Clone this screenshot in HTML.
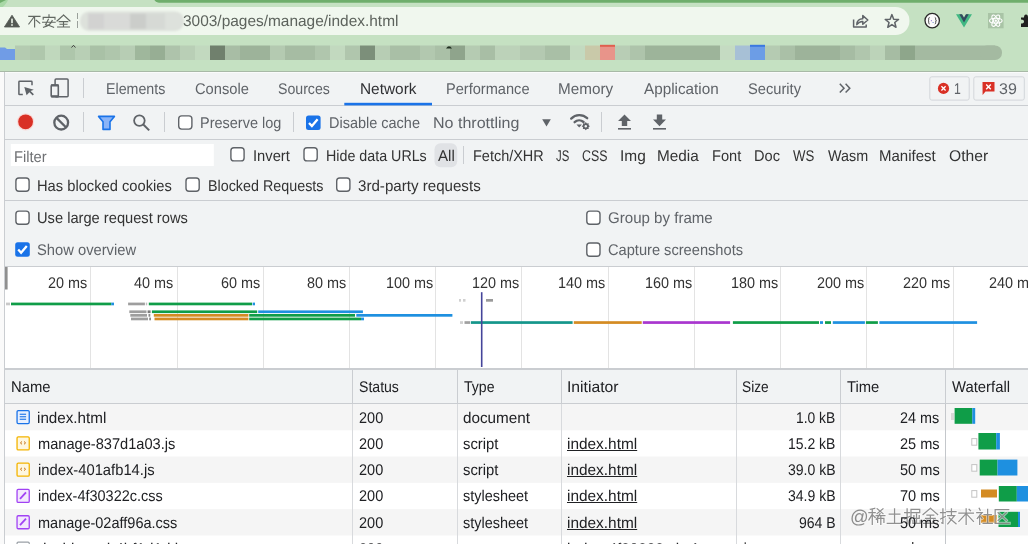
<!DOCTYPE html>
<html><head><meta charset="utf-8">
<style>
html,body{margin:0;padding:0;width:1028px;height:544px;overflow:hidden;background:#fff;}
body{position:relative;font-family:"Liberation Sans",sans-serif;}
svg.bg{position:absolute;left:0;top:0;}
.t{position:absolute;white-space:pre;line-height:20px;transform-origin:0 0;text-rendering:geometricPrecision;font-family:"Liberation Sans",sans-serif;}
</style></head><body>
<svg class="bg" width="1028" height="544" viewBox="0 0 1028 544">
<defs><filter id="bl" x="-10%" y="-30%" width="120%" height="160%"><feGaussianBlur stdDeviation="1.2"/></filter><filter id="bl2" x="-10%" y="-30%" width="120%" height="160%"><feGaussianBlur stdDeviation="0.6"/></filter></defs>
<rect x="0.00" y="0.00" width="1028.00" height="72.00" fill="#c5e1c2" />
<rect x="154" y="-10" width="900" height="12.8" rx="5" fill="#6fae6c"/>
<path d="M0 0 H8 Q6 5 0 9 Z" fill="#a8d8a6"/>
<path d="M0 0 H6 Q3 1.5 0 3 Z" fill="#6fae6c"/>
<rect x="-20" y="7" width="929.5" height="28" rx="14" fill="#f0f7ee"/>
<path d="M12 15.2 L19.6 27 H4.4 Z" fill="#535853" stroke="#535853" stroke-width="0.8" stroke-linejoin="round"/>
<rect x="11.20" y="18.60" width="1.60" height="4.60" fill="#eef6ec" />
<rect x="11.20" y="24.20" width="1.60" height="1.60" fill="#eef6ec" />
<g stroke="#626862" stroke-width="1.15" fill="none" stroke-linecap="square">
<path d="M28.8 16.3 H40 M34.6 16.5 V27 M34 17 L28.8 24 M36.2 20.2 L39.8 23.2"/>
<path d="M49 14.8 V16.6 M43.2 19.2 V17.3 H55 V19.2 M42.6 22.2 H55.2 M48.4 19.2 L45.5 24.8 Q50 25.5 53.6 27.2 M52.2 20.5 Q50.5 25.5 43.5 27.2"/>
<path d="M63.5 15 L57 21 M63.5 15 L70 21 M59.2 21.6 H67.8 M60 24.2 H67 M57.6 27 H69.4 M63.5 21.6 V27"/>
</g>
<rect x="77.00" y="13.00" width="1.00" height="6.00" fill="#9aa09a" />
<rect x="77.00" y="21.00" width="1.00" height="7.00" fill="#9aa09a" />
<g filter="url(#bl)">
<rect x="80" y="11.5" width="104" height="19.5" rx="9" fill="#dde1db"/>
<rect x="88.00" y="13.50" width="16.00" height="15.50" fill="#d2d2d1" />
<rect x="104.00" y="13.50" width="26.00" height="15.50" fill="#d9dad8" />
<rect x="130.00" y="13.50" width="16.00" height="15.50" fill="#cbcdca" />
<rect x="146.00" y="13.50" width="19.00" height="15.50" fill="#d6d9d5" />
<rect x="165.00" y="13.50" width="16.00" height="15.50" fill="#dde1dc" />
</g>
<g stroke="#5f6368" stroke-width="1.5" fill="none" stroke-linejoin="round">
<path d="M853.6 19.5 V27 H866.2 V24.5"/>
<path d="M856.8 24.6 Q857.2 18.8 862.8 18.8 V15.6 L867.8 20 L862.8 24.2 V21.4 Q859.4 21.2 856.8 24.6 Z"/>
</g>
<polygon points="891.90,14.60 893.66,19.17 898.56,19.44 894.75,22.53 896.01,27.26 891.90,24.60 887.79,27.26 889.05,22.53 885.24,19.44 890.14,19.17" fill="none" stroke="#5f6368" stroke-width="1.5" stroke-linejoin="round"/>
<circle cx="932.2" cy="20.6" r="7.2" fill="#fbfbfb" stroke="#2a2a2a" stroke-width="1.3"/>
<path d="M929.6 17.4 Q928.6 17.6 928.7 18.8 V19.8 Q928.7 20.6 928 20.7 Q928.7 20.8 928.7 21.6 V22.6 Q928.6 23.8 929.6 24 M934.8 17.4 Q935.8 17.6 935.7 18.8 V19.8 Q935.7 20.6 936.4 20.7 Q935.7 20.8 935.7 21.6 V22.6 Q935.8 23.8 934.8 24" stroke="#333" stroke-width="0.9" fill="none"/>
<rect x="930.90" y="20.20" width="1.00" height="1.00" fill="#8a6ad0" />
<rect x="932.60" y="22.00" width="1.00" height="1.00" fill="#6a8ad0" />
<path d="M956 14.3 H962 L964 17.7 L966 14.3 H972 L964 27.6 Z" fill="#41b883"/>
<path d="M959.3 14.3 H962 L964 17.7 L966 14.3 H968.7 L964 22.4 Z" fill="#35495e"/>
<rect x="988.00" y="13.00" width="15.60" height="15.30" fill="#a9c4a6" />
<g stroke="#fff" stroke-width="1.1" fill="none">
<ellipse cx="995.8" cy="20.65" rx="6.3" ry="2.4" transform="rotate(0 995.8 20.65)"/>
<ellipse cx="995.8" cy="20.65" rx="6.3" ry="2.4" transform="rotate(60 995.8 20.65)"/>
<ellipse cx="995.8" cy="20.65" rx="6.3" ry="2.4" transform="rotate(120 995.8 20.65)"/>
</g><circle cx="995.8" cy="20.65" r="1.2" fill="#fff"/>
<path d="M1021 17.5 H1024 Q1024 14.5 1026 14.5 Q1028 14.5 1028 17.5 H1030 V27 H1021 V23.5 Q1024 23.5 1024 21.5 Q1024 19.5 1021 19.5 Z" fill="#1f1f1f"/>
<g filter="url(#bl2)">
<rect x="15.00" y="45.50" width="15.00" height="14.50" fill="#b4cbb1" />
<rect x="30.00" y="45.50" width="15.00" height="14.50" fill="#afc7ac" />
<rect x="45.00" y="45.50" width="15.00" height="14.50" fill="#c0d8bd" />
<rect x="60.00" y="45.50" width="15.00" height="14.50" fill="#aec6ab" />
<rect x="75.00" y="45.50" width="15.00" height="14.50" fill="#b8cfb5" />
<rect x="90.00" y="45.50" width="15.00" height="14.50" fill="#a9c1a6" />
<rect x="105.00" y="45.50" width="15.00" height="14.50" fill="#afc6ac" />
<rect x="120.00" y="45.50" width="15.00" height="14.50" fill="#b7cdb4" />
<rect x="135.00" y="45.50" width="15.00" height="14.50" fill="#9fb79c" />
<rect x="150.00" y="45.50" width="15.00" height="14.50" fill="#97ae94" />
<rect x="165.00" y="45.50" width="15.00" height="14.50" fill="#aec3ab" />
<rect x="180.00" y="45.50" width="15.00" height="14.50" fill="#b9cfb6" />
<rect x="195.00" y="45.50" width="15.00" height="14.50" fill="#c2d9bf" />
<rect x="210.00" y="45.50" width="15.00" height="14.50" fill="#6f806d" />
<rect x="225.00" y="45.50" width="15.00" height="14.50" fill="#a8bda5" />
<rect x="240.00" y="45.50" width="30.00" height="14.50" fill="#9db39a" />
<rect x="270.00" y="45.50" width="15.00" height="14.50" fill="#b4cab1" />
<rect x="285.00" y="45.50" width="30.00" height="14.50" fill="#a6bca3" />
<rect x="315.00" y="45.50" width="15.00" height="14.50" fill="#b0c6ad" />
<rect x="330.00" y="45.50" width="15.00" height="14.50" fill="#c2d9bf" />
<rect x="345.00" y="45.50" width="15.00" height="14.50" fill="#b0c6ad" />
<rect x="360.00" y="45.50" width="15.00" height="14.50" fill="#7c8f7a" />
<rect x="375.00" y="45.50" width="15.00" height="14.50" fill="#b7cdb4" />
<rect x="390.00" y="45.50" width="30.00" height="14.50" fill="#a9bfa6" />
<rect x="420.00" y="45.50" width="15.00" height="14.50" fill="#b2c8af" />
<rect x="435.00" y="45.50" width="15.00" height="14.50" fill="#aac0a7" />
<rect x="450.00" y="45.50" width="15.00" height="14.50" fill="#8fa48c" />
<rect x="465.00" y="45.50" width="15.00" height="14.50" fill="#b5cbb2" />
<rect x="480.00" y="45.50" width="15.00" height="14.50" fill="#a8bea5" />
<rect x="495.00" y="45.50" width="25.00" height="14.50" fill="#bcd2b9" />
<rect x="520.00" y="45.50" width="25.00" height="14.50" fill="#b4c9b1" />
<rect x="545.00" y="45.50" width="25.00" height="14.50" fill="#a9bfa6" />
<rect x="570.00" y="45.50" width="15.00" height="14.50" fill="#c3dac0" />
<rect x="585.00" y="45.50" width="15.00" height="14.50" fill="#c9c9a9" />
<rect x="600.00" y="45.50" width="15.00" height="14.50" fill="#e8948a" />
<rect x="615.00" y="45.50" width="15.00" height="14.50" fill="#b8cdb5" />
<rect x="630.00" y="45.50" width="15.00" height="14.50" fill="#aec4ab" />
<rect x="645.00" y="45.50" width="75.00" height="14.50" fill="#9db49a" />
<rect x="720.00" y="45.50" width="15.00" height="14.50" fill="#c5dbc2" />
<rect x="735.00" y="45.50" width="15.00" height="14.50" fill="#a7c0d6" />
<rect x="750.00" y="45.50" width="15.00" height="14.50" fill="#6c9de6" />
<rect x="765.00" y="45.50" width="15.00" height="14.50" fill="#b5cbb2" />
<rect x="780.00" y="45.50" width="15.00" height="14.50" fill="#aac0a7" />
<rect x="795.00" y="45.50" width="45.00" height="14.50" fill="#9db39a" />
<rect x="840.00" y="45.50" width="15.00" height="14.50" fill="#a6bca3" />
<rect x="855.00" y="45.50" width="15.00" height="14.50" fill="#b0c6ad" />
<rect x="870.00" y="45.50" width="15.00" height="14.50" fill="#bcd3b9" />
<rect x="885.00" y="45.50" width="15.00" height="14.50" fill="#a6bca3" />
<rect x="900.00" y="45.50" width="15.00" height="14.50" fill="#8ea68b" />
<rect x="915.00" y="45.50" width="80.00" height="14.50" fill="#a4baa1" />
<rect x="980" y="45.5" width="22" height="14.5" rx="7" fill="#a4baa1"/>
<path d="M0 47.5 H5 L7 49 H15 V60 H0 Z" fill="#6f9ce6"/>
</g>
<rect x="600.00" y="44.80" width="15.00" height="2.00" fill="#df5f4f" />
<rect x="750.00" y="44.80" width="15.00" height="2.00" fill="#3b78e0" />
<path d="M446 48.5 Q449 44 452 48.5 Z" fill="#1f2f1f"/>
<path d="M71.5 47.5 L73.5 45.3 L75.5 47.5" stroke="#333" stroke-width="0.9" fill="none"/>
<rect x="0.00" y="72.00" width="1028.00" height="472.00" fill="#f1f3f4" />
<rect x="0.00" y="72.00" width="4.00" height="472.00" fill="#fafafa" />
<rect x="4.00" y="72.00" width="1.00" height="472.00" fill="#cacdd1" />
<rect x="0.00" y="71.00" width="1028.00" height="1.00" fill="#a8b9a7" />
<rect x="5.00" y="72.00" width="1023.00" height="1.00" fill="#fafbfb" />
<path d="M839.8 83.8 L844 88.2 L839.8 92.6 M845.6 83.8 L849.8 88.2 L845.6 92.6" stroke="#5f6368" stroke-width="1.5" fill="none"/>
<rect x="5.00" y="105.00" width="1023.00" height="1.00" fill="#cacdd1" />
<rect x="5.00" y="139.00" width="1023.00" height="1.00" fill="#cacdd1" />
<rect x="5.00" y="200.00" width="1023.00" height="1.00" fill="#cacdd1" />
<rect x="5.00" y="266.00" width="1023.00" height="1.00" fill="#cacdd1" />
<g stroke="#5f6368" stroke-width="1.5" fill="none" stroke-linejoin="round">
<path d="M22.8 94.6 H19.6 Q18.9 94.6 18.9 93.9 V81.9 Q18.9 81.2 19.6 81.2 H31.3 Q32 81.2 32 81.9 V85.3"/>
<rect x="55.1" y="79.1" width="13" height="17.7" rx="1"/>
</g>
<path d="M24.3 86.9 L33.8 89.8 L30.6 91 L33.9 94.3 L32.7 95.5 L29.4 92.2 L26.6 95.3 Z" fill="#5f6368"/>
<rect x="51.2" y="85" width="7.1" height="11.7" rx="1" fill="#f1f3f4" stroke="#5f6368" stroke-width="1.6"/>
<rect x="51.00" y="84.30" width="7.70" height="2.20" fill="#5f6368" />
<rect x="51.00" y="95.20" width="7.70" height="2.20" fill="#5f6368" />
<rect x="83.00" y="78.00" width="1.00" height="20.00" fill="#cacdd1" />
<rect x="344.30" y="102.80" width="87.70" height="2.60" fill="#1a73e8" />
<rect x="929.8" y="76.8" width="39.4" height="23.3" rx="2" fill="#f1f3f4" stroke="#d3d6da" stroke-width="1"/>
<rect x="973.8" y="76.8" width="50.5" height="23.3" rx="2" fill="#f1f3f4" stroke="#d3d6da" stroke-width="1"/>
<circle cx="943.5" cy="88.4" r="5.6" fill="#d93025"/>
<path d="M941.4 86.3 L945.6 90.5 M945.6 86.3 L941.4 90.5" stroke="#fff" stroke-width="1.3"/>
<path d="M982.5 82 H994.5 V91.6 H985.5 L982.6 95 Z" fill="#d93025"/>
<path d="M986.2 84.6 L990.8 89.2 M990.8 84.6 L986.2 89.2" stroke="#fff" stroke-width="1.4"/>
<circle cx="25.6" cy="121.8" r="8.6" fill="#fbd3d0" opacity="0.8"/>
<circle cx="25.6" cy="121.8" r="7.4" fill="#d93025"/>
<circle cx="61.2" cy="122.6" r="6.9" fill="none" stroke="#5f6368" stroke-width="2.3"/>
<path d="M56.5 117.9 L65.9 127.3" stroke="#5f6368" stroke-width="2.3"/>
<rect x="83.00" y="112.00" width="1.00" height="20.00" fill="#cacdd1" />
<rect x="164.00" y="112.00" width="1.00" height="20.00" fill="#cacdd1" />
<rect x="293.00" y="112.00" width="1.00" height="20.00" fill="#cacdd1" />
<rect x="601.00" y="112.00" width="1.00" height="20.00" fill="#cacdd1" />
<path d="M98.6 116.4 H114.4 L110 121.8 V129.4 H103 V121.8 Z" fill="#8ab4f8" stroke="#1a73e8" stroke-width="1.6" stroke-linejoin="round"/>
<circle cx="139.4" cy="120.6" r="5.3" fill="none" stroke="#5f6368" stroke-width="1.8"/>
<path d="M143.3 124.5 L149.2 130.4" stroke="#5f6368" stroke-width="2"/>
<rect x="178.70" y="115.90" width="13.20" height="13.20" rx="3" fill="#fff" stroke="#5f6368" stroke-width="1.4"/>
<rect x="306.00" y="115.50" width="14.60" height="14.60" rx="2.5" fill="#1a73e8"/>
<path d="M309.00 122.90 L311.90 126.10 L317.60 119.30" stroke="#fff" stroke-width="2.3" fill="none"/>
<path d="M542.2 119.2 H550.8 L546.5 126.6 Z" fill="#5f6368"/>
<g fill="none" stroke="#5f6368" stroke-width="2.3" stroke-linecap="round">
<path d="M571.2 118.6 A11.5 11.5 0 0 1 587.2 118.2"/>
<path d="M574.6 122.2 A6.8 6.8 0 0 1 583.6 122"/>
</g>
<path d="M576.5 124.6 L579.2 127.6 L581.9 124.6 Z" fill="#5f6368"/>
<polygon points="589.90,126.20 588.57,127.35 588.70,129.10 586.95,128.97 585.80,130.30 584.65,128.97 582.90,129.10 583.03,127.35 581.70,126.20 583.03,125.05 582.90,123.30 584.65,123.43 585.80,122.10 586.95,123.43 588.70,123.30 588.57,125.05" fill="#5f6368"/>
<circle cx="585.8" cy="126.2" r="1.2" fill="#f1f3f4"/>
<path d="M624.5 114.4 L631 121 H627.2 V126 H621.8 V121 H618 Z" fill="#5f6368"/>
<rect x="618.00" y="128.00" width="13.00" height="1.60" fill="#5f6368" />
<path d="M656.8 114.4 H662.2 V119.6 H666 L659.5 126.2 L653 119.6 H656.8 Z" fill="#5f6368"/>
<rect x="653.00" y="128.00" width="13.00" height="1.60" fill="#5f6368" />
<rect x="10.80" y="144.00" width="203.00" height="22.00" fill="#ffffff" />
<rect x="434.5" y="143.2" width="22.7" height="24" rx="6" fill="#e0e2e5"/>
<rect x="463.00" y="146.00" width="1.00" height="18.00" fill="#cacdd1" />
<rect x="230.90" y="147.70" width="13.20" height="13.20" rx="3" fill="#fff" stroke="#5f6368" stroke-width="1.4"/>
<rect x="304.00" y="147.70" width="13.20" height="13.20" rx="3" fill="#fff" stroke="#5f6368" stroke-width="1.4"/>
<rect x="15.90" y="178.00" width="13.20" height="13.20" rx="3" fill="#fff" stroke="#5f6368" stroke-width="1.4"/>
<rect x="186.00" y="178.00" width="13.20" height="13.20" rx="3" fill="#fff" stroke="#5f6368" stroke-width="1.4"/>
<rect x="336.70" y="178.00" width="13.20" height="13.20" rx="3" fill="#fff" stroke="#5f6368" stroke-width="1.4"/>
<rect x="15.90" y="211.10" width="13.20" height="13.20" rx="3" fill="#fff" stroke="#5f6368" stroke-width="1.4"/>
<rect x="15.20" y="242.20" width="14.60" height="14.60" rx="2.5" fill="#1a73e8"/>
<path d="M18.20 249.60 L21.10 252.80 L26.80 246.00" stroke="#fff" stroke-width="2.3" fill="none"/>
<rect x="586.80" y="211.10" width="13.20" height="13.20" rx="3" fill="#fff" stroke="#5f6368" stroke-width="1.4"/>
<rect x="586.80" y="243.00" width="13.20" height="13.20" rx="3" fill="#fff" stroke="#5f6368" stroke-width="1.4"/>
<rect x="5.00" y="267.00" width="1023.00" height="101.00" fill="#ffffff" />
<rect x="90.00" y="267.00" width="1.00" height="101.00" fill="#e3e3e3" />
<rect x="177.00" y="267.00" width="1.00" height="101.00" fill="#e3e3e3" />
<rect x="263.00" y="267.00" width="1.00" height="101.00" fill="#e3e3e3" />
<rect x="349.00" y="267.00" width="1.00" height="101.00" fill="#e3e3e3" />
<rect x="435.00" y="267.00" width="1.00" height="101.00" fill="#e3e3e3" />
<rect x="521.00" y="267.00" width="1.00" height="101.00" fill="#e3e3e3" />
<rect x="608.00" y="267.00" width="1.00" height="101.00" fill="#e3e3e3" />
<rect x="694.00" y="267.00" width="1.00" height="101.00" fill="#e3e3e3" />
<rect x="780.00" y="267.00" width="1.00" height="101.00" fill="#e3e3e3" />
<rect x="866.00" y="267.00" width="1.00" height="101.00" fill="#e3e3e3" />
<rect x="953.00" y="267.00" width="1.00" height="101.00" fill="#e3e3e3" />
<rect x="5.00" y="267.00" width="2.60" height="22.50" fill="#8f8f8f" />
<rect x="5.00" y="368.00" width="1023.00" height="2.00" fill="#cacdd1" />
<rect x="6.00" y="302.60" width="4.00" height="2.70" fill="#c8c8c8" />
<rect x="11.00" y="302.60" width="100.20" height="2.70" fill="#0f9d48" />
<rect x="111.20" y="302.60" width="2.80" height="2.70" fill="#1e90e0" />
<rect x="128.10" y="302.60" width="16.80" height="2.70" fill="#9e9e9e" />
<rect x="145.80" y="302.60" width="1.40" height="2.70" fill="#c0c0c0" />
<rect x="148.80" y="302.60" width="103.20" height="2.70" fill="#0f9d48" />
<rect x="252.60" y="302.60" width="2.40" height="2.70" fill="#1e90e0" />
<rect x="129.30" y="310.40" width="17.20" height="2.70" fill="#9e9e9e" />
<rect x="147.60" y="310.40" width="3.00" height="2.70" fill="#7a7a7a" />
<rect x="151.90" y="310.40" width="105.30" height="2.70" fill="#0f9d48" />
<rect x="258.20" y="310.40" width="104.70" height="2.70" fill="#1e90e0" />
<rect x="130.30" y="314.00" width="16.70" height="2.70" fill="#9e9e9e" />
<rect x="148.50" y="314.00" width="1.80" height="2.70" fill="#8a8a8a" />
<rect x="153.80" y="314.00" width="94.60" height="2.70" fill="#d48b22" />
<rect x="249.20" y="314.00" width="105.80" height="2.70" fill="#0f9d48" />
<rect x="356.30" y="314.00" width="96.10" height="2.70" fill="#1e90e0" />
<rect x="131.00" y="317.60" width="17.00" height="2.70" fill="#9e9e9e" />
<rect x="149.20" y="317.60" width="1.80" height="2.70" fill="#8a8a8a" />
<rect x="154.50" y="317.60" width="93.90" height="2.70" fill="#d48b22" />
<rect x="249.20" y="317.60" width="111.80" height="2.70" fill="#0f9d48" />
<rect x="361.00" y="317.60" width="3.00" height="2.70" fill="#1e90e0" />
<rect x="459.00" y="299.00" width="2.00" height="2.70" fill="#d0d0d0" />
<rect x="463.00" y="299.00" width="2.50" height="2.70" fill="#d0d0d0" />
<rect x="486.00" y="299.00" width="7.00" height="2.70" fill="#9a9a9a" />
<rect x="460.00" y="321.20" width="3.00" height="2.70" fill="#d0d0d0" />
<rect x="464.50" y="321.20" width="5.50" height="2.70" fill="#a0a0a0" />
<rect x="470.80" y="321.20" width="101.80" height="2.70" fill="#14968b" />
<rect x="573.80" y="321.20" width="67.90" height="2.70" fill="#d48b22" />
<rect x="642.80" y="321.20" width="87.30" height="2.70" fill="#a936cf" />
<rect x="732.90" y="321.20" width="86.10" height="2.70" fill="#0f9d48" />
<rect x="820.00" y="321.20" width="3.00" height="2.70" fill="#1e90e0" />
<rect x="825.00" y="321.20" width="6.00" height="2.70" fill="#0f9d48" />
<rect x="832.80" y="321.20" width="32.10" height="2.70" fill="#1e90e0" />
<rect x="865.90" y="321.20" width="12.00" height="2.70" fill="#0f9d48" />
<rect x="879.40" y="321.20" width="97.70" height="2.70" fill="#1e90e0" />
<rect x="480.90" y="292.20" width="1.60" height="74.80" fill="#45459a" />
<rect x="5.00" y="370.00" width="1023.00" height="33.00" fill="#f1f3f4" />
<rect x="5.00" y="403.00" width="1023.00" height="1.00" fill="#cacdd1" />
<rect x="5.00" y="404.00" width="1023.00" height="26.50" fill="#f5f5f5" />
<rect x="5.00" y="430.30" width="1023.00" height="26.50" fill="#ffffff" />
<rect x="5.00" y="456.60" width="1023.00" height="26.50" fill="#f5f5f5" />
<rect x="5.00" y="482.90" width="1023.00" height="26.50" fill="#ffffff" />
<rect x="5.00" y="509.20" width="1023.00" height="26.50" fill="#f5f5f5" />
<rect x="5.00" y="535.50" width="1023.00" height="26.50" fill="#ffffff" />
<rect x="352.00" y="370.00" width="1.00" height="33.00" fill="#cacdd1" />
<rect x="352.00" y="404.00" width="1.00" height="140.00" fill="#d8dadd" />
<rect x="457.00" y="370.00" width="1.00" height="33.00" fill="#cacdd1" />
<rect x="457.00" y="404.00" width="1.00" height="140.00" fill="#d8dadd" />
<rect x="561.00" y="370.00" width="1.00" height="33.00" fill="#cacdd1" />
<rect x="561.00" y="404.00" width="1.00" height="140.00" fill="#d8dadd" />
<rect x="736.00" y="370.00" width="1.00" height="33.00" fill="#cacdd1" />
<rect x="736.00" y="404.00" width="1.00" height="140.00" fill="#d8dadd" />
<rect x="840.00" y="370.00" width="1.00" height="33.00" fill="#cacdd1" />
<rect x="840.00" y="404.00" width="1.00" height="140.00" fill="#d8dadd" />
<rect x="945.00" y="370.00" width="1.00" height="33.00" fill="#cacdd1" />
<rect x="945.00" y="404.00" width="1.00" height="140.00" fill="#c4c7cb" />
<rect x="17.05" y="410.55" width="12.2" height="13" rx="1.2" fill="#e8f0fe" stroke="#1a73e8" stroke-width="1.3"/>
<rect x="19.70" y="413.70" width="6.40" height="1.10" fill="#1a73e8" />
<rect x="19.70" y="416.20" width="6.40" height="1.10" fill="#1a73e8" />
<rect x="19.70" y="418.70" width="6.40" height="1.10" fill="#1a73e8" />
<rect x="17.05" y="436.85" width="12.2" height="13" rx="1.2" fill="#fef7e0" stroke="#f4b400" stroke-width="1.3"/>
<path d="M22.00 441.50 l-1.6 1.4 l1.6 1.4 M24.00 441.50 l1.6 1.4 l-1.6 1.4" stroke="#c26401" stroke-width="0.9" fill="none"/>
<rect x="17.05" y="463.15" width="12.2" height="13" rx="1.2" fill="#fef7e0" stroke="#f4b400" stroke-width="1.3"/>
<path d="M22.00 467.80 l-1.6 1.4 l1.6 1.4 M24.00 467.80 l1.6 1.4 l-1.6 1.4" stroke="#c26401" stroke-width="0.9" fill="none"/>
<rect x="17.05" y="489.45" width="12.2" height="13" rx="1.2" fill="#f3e8fd" stroke="#a142f4" stroke-width="1.3"/>
<path d="M20.00 498.80 L26.00 492.40" stroke="#a142f4" stroke-width="1.8"/>
<rect x="17.05" y="515.75" width="12.2" height="13" rx="1.2" fill="#f3e8fd" stroke="#a142f4" stroke-width="1.3"/>
<path d="M20.00 525.10 L26.00 518.70" stroke="#a142f4" stroke-width="1.8"/>
<rect x="17.05" y="542.05" width="12.2" height="13" rx="1.2" fill="#fff" stroke="#9aa0a6" stroke-width="1.2"/>
<rect x="951.00" y="413.00" width="3.00" height="7.00" fill="#d8d8d8" />
<rect x="954.60" y="408.00" width="17.70" height="15.80" fill="#0f9d48" />
<rect x="972.30" y="408.00" width="2.90" height="15.80" fill="#1e90e0" />
<rect x="971.8" y="438.60" width="5" height="6.6" fill="#fff" stroke="#c4c4c4" stroke-width="1"/>
<rect x="978.40" y="433.00" width="17.80" height="16.50" fill="#0f9d48" />
<rect x="996.20" y="433.00" width="3.70" height="16.50" fill="#1e90e0" />
<rect x="971.8" y="464.60" width="5" height="6.6" fill="#fff" stroke="#c4c4c4" stroke-width="1"/>
<rect x="979.70" y="459.60" width="17.80" height="15.90" fill="#0f9d48" />
<rect x="997.50" y="459.60" width="19.90" height="15.90" fill="#1e90e0" />
<rect x="971.8" y="490.60" width="5" height="6.6" fill="#fff" stroke="#c4c4c4" stroke-width="1"/>
<rect x="981.00" y="489.50" width="16.00" height="8.00" fill="#d48b22" />
<rect x="998.80" y="486.00" width="18.00" height="15.50" fill="#0f9d48" />
<rect x="1016.80" y="486.00" width="12.00" height="15.50" fill="#1e90e0" />
<rect x="981.00" y="515.00" width="16.00" height="8.00" fill="#d48b22" />
<rect x="998.50" y="511.80" width="19.50" height="15.20" fill="#0f9d48" />
<rect x="1018.00" y="511.80" width="2.00" height="15.20" fill="#1e90e0" />
<g fill="none" stroke-linecap="square" stroke-linejoin="miter"><path d="M870.34 509.26 L874.71 508.29 M868.89 512.65 L875.19 512.65 M872.28 509.26 L872.28 524.30 M872.28 514.11 L868.89 519.93 M872.77 515.08 L875.19 517.51 M877.14 508.77 L882.96 513.62 M882.96 508.77 L877.14 513.62 M876.16 515.56 L884.90 515.56 M880.05 513.62 L876.36 519.45 M877.62 522.36 L877.62 518.48 L883.93 518.48 L883.93 522.36 M880.82 516.54 L880.82 524.30 M889.21 514.11 L899.89 514.11 M894.55 508.77 L894.55 523.33 M887.27 523.33 L901.83 523.33 M904.69 512.65 L909.54 512.65 M907.11 508.77 L907.11 523.33 L905.95 522.84 M904.69 518.96 L909.54 516.54 M911.48 512.65 L919.73 512.65 L919.73 509.26 L910.99 509.26 L910.99 517.51 L910.02 523.81 M913.91 515.56 L913.91 518.48 L919.24 518.48 L919.24 515.56 M916.53 514.11 L916.53 523.33 M912.94 520.42 L912.94 523.33 L920.21 523.33 L920.21 520.42 M930.35 508.29 L923.07 514.59 M930.35 508.29 L937.63 514.59 M926.95 515.08 L933.75 515.08 M925.50 518.48 L935.20 518.48 M930.35 515.08 L930.35 523.33 M926.95 519.93 L927.92 521.87 M933.75 519.93 L932.78 521.87 M923.56 523.33 L937.14 523.33 M940.49 512.65 L945.34 512.65 M942.91 508.77 L942.91 523.33 L941.75 522.84 M940.49 518.96 L945.34 516.54 M946.79 511.68 L956.01 511.68 M951.45 508.77 L951.45 515.08 M947.76 515.56 L954.56 515.56 L947.76 523.81 M949.22 517.99 L956.01 523.81 M958.87 513.14 L973.43 513.14 M966.15 508.77 L966.15 524.30 M965.66 514.11 L958.87 521.39 M966.64 514.11 L973.43 521.39 M969.06 509.26 L970.52 510.71 M979.20 508.29 L980.17 510.23 M976.77 512.65 L982.11 512.65 L977.26 518.48 M979.68 515.08 L979.68 524.30 M980.65 516.54 L982.11 518.48 M984.05 514.59 L991.33 514.59 M987.64 509.26 L987.64 523.33 M983.08 523.33 L992.30 523.33 M1008.74 509.74 L995.16 509.74 L995.16 523.33 L1009.23 523.33 M998.07 512.65 L1006.32 520.42 M1006.32 512.65 L998.07 520.42" stroke="#ffffff" stroke-opacity="0.55" stroke-width="3"/><path d="M870.34 509.26 L874.71 508.29 M868.89 512.65 L875.19 512.65 M872.28 509.26 L872.28 524.30 M872.28 514.11 L868.89 519.93 M872.77 515.08 L875.19 517.51 M877.14 508.77 L882.96 513.62 M882.96 508.77 L877.14 513.62 M876.16 515.56 L884.90 515.56 M880.05 513.62 L876.36 519.45 M877.62 522.36 L877.62 518.48 L883.93 518.48 L883.93 522.36 M880.82 516.54 L880.82 524.30 M889.21 514.11 L899.89 514.11 M894.55 508.77 L894.55 523.33 M887.27 523.33 L901.83 523.33 M904.69 512.65 L909.54 512.65 M907.11 508.77 L907.11 523.33 L905.95 522.84 M904.69 518.96 L909.54 516.54 M911.48 512.65 L919.73 512.65 L919.73 509.26 L910.99 509.26 L910.99 517.51 L910.02 523.81 M913.91 515.56 L913.91 518.48 L919.24 518.48 L919.24 515.56 M916.53 514.11 L916.53 523.33 M912.94 520.42 L912.94 523.33 L920.21 523.33 L920.21 520.42 M930.35 508.29 L923.07 514.59 M930.35 508.29 L937.63 514.59 M926.95 515.08 L933.75 515.08 M925.50 518.48 L935.20 518.48 M930.35 515.08 L930.35 523.33 M926.95 519.93 L927.92 521.87 M933.75 519.93 L932.78 521.87 M923.56 523.33 L937.14 523.33 M940.49 512.65 L945.34 512.65 M942.91 508.77 L942.91 523.33 L941.75 522.84 M940.49 518.96 L945.34 516.54 M946.79 511.68 L956.01 511.68 M951.45 508.77 L951.45 515.08 M947.76 515.56 L954.56 515.56 L947.76 523.81 M949.22 517.99 L956.01 523.81 M958.87 513.14 L973.43 513.14 M966.15 508.77 L966.15 524.30 M965.66 514.11 L958.87 521.39 M966.64 514.11 L973.43 521.39 M969.06 509.26 L970.52 510.71 M979.20 508.29 L980.17 510.23 M976.77 512.65 L982.11 512.65 L977.26 518.48 M979.68 515.08 L979.68 524.30 M980.65 516.54 L982.11 518.48 M984.05 514.59 L991.33 514.59 M987.64 509.26 L987.64 523.33 M983.08 523.33 L992.30 523.33 M1008.74 509.74 L995.16 509.74 L995.16 523.33 L1009.23 523.33 M998.07 512.65 L1006.32 520.42 M1006.32 512.65 L998.07 520.42" stroke="#7d7d7d" stroke-opacity="0.85" stroke-width="1.25"/></g>
<rect x="744.60" y="542.30" width="1.30" height="1.70" fill="#444" />
<rect x="912.00" y="542.00" width="1.40" height="2.00" fill="#444" />
</svg>
<div class="t" style="left:183.02px;top:12.20px;color:#5d635d;font-size:15.5px;font-weight:normal;transform:scaleX(0.9960);">3003/pages/manage/index.html</div>
<div class="t" style="left:106.34px;top:79.70px;color:#5f6368;font-size:15.5px;font-weight:normal;transform:scaleX(0.9183);">Elements</div>
<div class="t" style="left:195.29px;top:79.70px;color:#5f6368;font-size:15.5px;font-weight:normal;transform:scaleX(0.9473);">Console</div>
<div class="t" style="left:278.19px;top:79.70px;color:#5f6368;font-size:15.5px;font-weight:normal;transform:scaleX(0.9117);">Sources</div>
<div class="t" style="left:360.23px;top:79.70px;color:#303134;font-size:15.5px;font-weight:normal;transform:scaleX(0.9934);">Network</div>
<div class="t" style="left:445.91px;top:79.70px;color:#5f6368;font-size:15.5px;font-weight:normal;transform:scaleX(0.9410);">Performance</div>
<div class="t" style="left:558.44px;top:79.70px;color:#5f6368;font-size:15.5px;font-weight:normal;transform:scaleX(0.9844);">Memory</div>
<div class="t" style="left:644.23px;top:79.70px;color:#5f6368;font-size:15.5px;font-weight:normal;transform:scaleX(0.9841);">Application</div>
<div class="t" style="left:747.74px;top:79.70px;color:#5f6368;font-size:15.5px;font-weight:normal;transform:scaleX(0.9466);">Security</div>
<div class="t" style="left:953.73px;top:79.50px;color:#5f6368;font-size:15.5px;font-weight:normal;transform:scaleX(0.7899);">1</div>
<div class="t" style="left:999.46px;top:79.50px;color:#5f6368;font-size:15.5px;font-weight:normal;transform:scaleX(1.0323);">39</div>
<div class="t" style="left:200.12px;top:113.60px;color:#5f6368;font-size:15.5px;font-weight:normal;transform:scaleX(0.9343);">Preserve log</div>
<div class="t" style="left:328.51px;top:113.60px;color:#5f6368;font-size:15.5px;font-weight:normal;transform:scaleX(0.9344);">Disable cache</div>
<div class="t" style="left:432.77px;top:113.60px;color:#5f6368;font-size:15.5px;font-weight:normal;transform:scaleX(1.0342);">No throttling</div>
<div class="t" style="left:14.39px;top:147.90px;color:#6f7174;font-size:15.5px;font-weight:normal;transform:scaleX(0.9483);">Filter</div>
<div class="t" style="left:253.08px;top:147.20px;color:#333333;font-size:15.5px;font-weight:normal;transform:scaleX(0.9507);">Invert</div>
<div class="t" style="left:325.73px;top:147.20px;color:#333333;font-size:15.5px;font-weight:normal;transform:scaleX(0.9209);">Hide data URLs</div>
<div class="t" style="left:438.43px;top:147.20px;color:#333333;font-size:15.5px;font-weight:normal;transform:scaleX(0.9760);">All</div>
<div class="t" style="left:473.12px;top:147.20px;color:#333333;font-size:15.5px;font-weight:normal;transform:scaleX(0.9337);">Fetch/XHR</div>
<div class="t" style="left:555.88px;top:147.20px;color:#333333;font-size:15.5px;font-weight:normal;transform:scaleX(0.7313);">JS</div>
<div class="t" style="left:581.60px;top:147.20px;color:#333333;font-size:15.5px;font-weight:normal;transform:scaleX(0.7973);">CSS</div>
<div class="t" style="left:619.61px;top:147.20px;color:#333333;font-size:15.5px;font-weight:normal;transform:scaleX(0.9976);">Img</div>
<div class="t" style="left:657.43px;top:147.20px;color:#333333;font-size:15.5px;font-weight:normal;transform:scaleX(0.9892);">Media</div>
<div class="t" style="left:711.80px;top:147.20px;color:#333333;font-size:15.5px;font-weight:normal;transform:scaleX(0.9420);">Font</div>
<div class="t" style="left:754.10px;top:147.20px;color:#333333;font-size:15.5px;font-weight:normal;transform:scaleX(0.9412);">Doc</div>
<div class="t" style="left:793.29px;top:147.20px;color:#333333;font-size:15.5px;font-weight:normal;transform:scaleX(0.8526);">WS</div>
<div class="t" style="left:827.95px;top:147.20px;color:#333333;font-size:15.5px;font-weight:normal;transform:scaleX(0.9260);">Wasm</div>
<div class="t" style="left:879.47px;top:147.20px;color:#333333;font-size:15.5px;font-weight:normal;transform:scaleX(0.9681);">Manifest</div>
<div class="t" style="left:949.01px;top:147.20px;color:#333333;font-size:15.5px;font-weight:normal;transform:scaleX(1.0091);">Other</div>
<div class="t" style="left:37.49px;top:177.10px;color:#333333;font-size:15.5px;font-weight:normal;transform:scaleX(0.9484);">Has blocked cookies</div>
<div class="t" style="left:207.83px;top:177.10px;color:#333333;font-size:15.5px;font-weight:normal;transform:scaleX(0.9243);">Blocked Requests</div>
<div class="t" style="left:357.84px;top:177.10px;color:#333333;font-size:15.5px;font-weight:normal;transform:scaleX(0.9754);">3rd-party requests</div>
<div class="t" style="left:37.40px;top:208.80px;color:#333333;font-size:15.5px;font-weight:normal;transform:scaleX(0.9463);">Use large request rows</div>
<div class="t" style="left:37.43px;top:241.30px;color:#5f6368;font-size:15.5px;font-weight:normal;transform:scaleX(0.9505);">Show overview</div>
<div class="t" style="left:608.05px;top:208.80px;color:#5f6368;font-size:15.5px;font-weight:normal;transform:scaleX(0.9727);">Group by frame</div>
<div class="t" style="left:608.09px;top:241.30px;color:#5f6368;font-size:15.5px;font-weight:normal;transform:scaleX(0.9440);">Capture screenshots</div>
<div class="t" style="left:48.09px;top:274.00px;color:#333333;font-size:15.5px;font-weight:normal;transform:scaleX(0.9300);">20 ms</div>
<div class="t" style="left:134.39px;top:274.00px;color:#333333;font-size:15.5px;font-weight:normal;transform:scaleX(0.9300);">40 ms</div>
<div class="t" style="left:220.99px;top:274.00px;color:#333333;font-size:15.5px;font-weight:normal;transform:scaleX(0.9300);">60 ms</div>
<div class="t" style="left:307.09px;top:274.00px;color:#333333;font-size:15.5px;font-weight:normal;transform:scaleX(0.9300);">80 ms</div>
<div class="t" style="left:385.75px;top:274.00px;color:#333333;font-size:15.5px;font-weight:normal;transform:scaleX(0.9300);">100 ms</div>
<div class="t" style="left:471.95px;top:274.00px;color:#333333;font-size:15.5px;font-weight:normal;transform:scaleX(0.9300);">120 ms</div>
<div class="t" style="left:558.05px;top:274.00px;color:#333333;font-size:15.5px;font-weight:normal;transform:scaleX(0.9300);">140 ms</div>
<div class="t" style="left:644.55px;top:274.00px;color:#333333;font-size:15.5px;font-weight:normal;transform:scaleX(0.9300);">160 ms</div>
<div class="t" style="left:730.75px;top:274.00px;color:#333333;font-size:15.5px;font-weight:normal;transform:scaleX(0.9300);">180 ms</div>
<div class="t" style="left:816.95px;top:274.00px;color:#333333;font-size:15.5px;font-weight:normal;transform:scaleX(0.9300);">200 ms</div>
<div class="t" style="left:903.05px;top:274.00px;color:#333333;font-size:15.5px;font-weight:normal;transform:scaleX(0.9300);">220 ms</div>
<div class="t" style="left:988.51px;top:274.00px;color:#333333;font-size:15.5px;font-weight:normal;transform:scaleX(0.9300);">240 ms</div>
<div class="t" style="left:11.18px;top:378.20px;color:#202124;font-size:15.5px;font-weight:normal;transform:scaleX(0.9556);">Name</div>
<div class="t" style="left:359.09px;top:378.20px;color:#202124;font-size:15.5px;font-weight:normal;transform:scaleX(0.9081);">Status</div>
<div class="t" style="left:463.63px;top:378.20px;color:#202124;font-size:15.5px;font-weight:normal;transform:scaleX(0.9080);">Type</div>
<div class="t" style="left:567.48px;top:378.20px;color:#202124;font-size:15.5px;font-weight:normal;transform:scaleX(1.0139);">Initiator</div>
<div class="t" style="left:742.23px;top:378.20px;color:#202124;font-size:15.5px;font-weight:normal;transform:scaleX(0.8828);">Size</div>
<div class="t" style="left:846.88px;top:378.20px;color:#202124;font-size:15.5px;font-weight:normal;transform:scaleX(0.9534);">Time</div>
<div class="t" style="left:952.34px;top:378.20px;color:#202124;font-size:15.5px;font-weight:normal;transform:scaleX(0.9571);">Waterfall</div>
<div class="t" style="left:37.47px;top:408.90px;color:#202124;font-size:15.5px;font-weight:normal;transform:scaleX(0.9815);">index.html</div>
<div class="t" style="left:359.11px;top:408.90px;color:#202124;font-size:15.5px;font-weight:normal;transform:scaleX(0.9357);">200</div>
<div class="t" style="left:463.36px;top:408.90px;color:#202124;font-size:15.5px;font-weight:normal;transform:scaleX(0.9847);">document</div>
<div class="t" style="left:796.28px;top:408.90px;color:#202124;font-size:15.5px;font-weight:normal;transform:scaleX(0.8931);">1.0 kB</div>
<div class="t" style="left:900.32px;top:408.90px;color:#202124;font-size:15.5px;font-weight:normal;transform:scaleX(0.9270);">24 ms</div>
<div class="t" style="left:37.53px;top:434.90px;color:#202124;font-size:15.5px;font-weight:normal;transform:scaleX(0.9429);">manage-837d1a03.js</div>
<div class="t" style="left:359.11px;top:434.90px;color:#202124;font-size:15.5px;font-weight:normal;transform:scaleX(0.9357);">200</div>
<div class="t" style="left:463.43px;top:434.90px;color:#202124;font-size:15.5px;font-weight:normal;transform:scaleX(0.9563);">script</div>
<div class="t" style="left:567.15px;top:434.90px;color:#202124;font-size:15.5px;font-weight:normal;transform:scaleX(0.9933);text-decoration:underline;">index.html</div>
<div class="t" style="left:787.87px;top:434.90px;color:#202124;font-size:15.5px;font-weight:normal;transform:scaleX(0.9012);">15.2 kB</div>
<div class="t" style="left:899.80px;top:434.90px;color:#202124;font-size:15.5px;font-weight:normal;transform:scaleX(0.9394);">25 ms</div>
<div class="t" style="left:37.51px;top:461.00px;color:#202124;font-size:15.5px;font-weight:normal;transform:scaleX(0.9529);">index-401afb14.js</div>
<div class="t" style="left:359.11px;top:461.00px;color:#202124;font-size:15.5px;font-weight:normal;transform:scaleX(0.9357);">200</div>
<div class="t" style="left:463.43px;top:461.00px;color:#202124;font-size:15.5px;font-weight:normal;transform:scaleX(0.9563);">script</div>
<div class="t" style="left:567.15px;top:461.00px;color:#202124;font-size:15.5px;font-weight:normal;transform:scaleX(0.9933);text-decoration:underline;">index.html</div>
<div class="t" style="left:787.64px;top:461.00px;color:#202124;font-size:15.5px;font-weight:normal;transform:scaleX(0.9055);">39.0 kB</div>
<div class="t" style="left:899.75px;top:461.00px;color:#202124;font-size:15.5px;font-weight:normal;transform:scaleX(0.9406);">50 ms</div>
<div class="t" style="left:37.54px;top:487.10px;color:#202124;font-size:15.5px;font-weight:normal;transform:scaleX(0.9336);">index-4f30322c.css</div>
<div class="t" style="left:359.11px;top:487.10px;color:#202124;font-size:15.5px;font-weight:normal;transform:scaleX(0.9357);">200</div>
<div class="t" style="left:463.46px;top:487.10px;color:#202124;font-size:15.5px;font-weight:normal;transform:scaleX(0.9312);">stylesheet</div>
<div class="t" style="left:567.15px;top:487.10px;color:#202124;font-size:15.5px;font-weight:normal;transform:scaleX(0.9933);text-decoration:underline;">index.html</div>
<div class="t" style="left:787.64px;top:487.10px;color:#202124;font-size:15.5px;font-weight:normal;transform:scaleX(0.9055);">34.9 kB</div>
<div class="t" style="left:899.77px;top:487.10px;color:#202124;font-size:15.5px;font-weight:normal;transform:scaleX(0.9402);">70 ms</div>
<div class="t" style="left:37.54px;top:513.50px;color:#202124;font-size:15.5px;font-weight:normal;transform:scaleX(0.9366);">manage-02aff96a.css</div>
<div class="t" style="left:359.11px;top:513.50px;color:#202124;font-size:15.5px;font-weight:normal;transform:scaleX(0.9357);">200</div>
<div class="t" style="left:463.46px;top:513.50px;color:#202124;font-size:15.5px;font-weight:normal;transform:scaleX(0.9312);">stylesheet</div>
<div class="t" style="left:567.15px;top:513.50px;color:#202124;font-size:15.5px;font-weight:normal;transform:scaleX(0.9933);text-decoration:underline;">index.html</div>
<div class="t" style="left:798.56px;top:513.50px;color:#202124;font-size:15.5px;font-weight:normal;transform:scaleX(0.9043);">964 B</div>
<div class="t" style="left:900.06px;top:513.50px;color:#202124;font-size:15.5px;font-weight:normal;transform:scaleX(0.9331);">50 ms</div>
<div class="t" style="left:37.56px;top:540.20px;color:#202124;font-size:15.5px;font-weight:normal;transform:scaleX(0.9850);">dashboard-4bf1d1d.js</div>
<div class="t" style="left:359.11px;top:540.20px;color:#202124;font-size:15.5px;font-weight:normal;transform:scaleX(0.9357);">200</div>
<div class="t" style="left:567.17px;top:540.20px;color:#202124;font-size:15.5px;font-weight:normal;transform:scaleX(0.9850);text-decoration:underline;">index-4f30322c.js:1</div>
<div class="t" style="left:849.56px;top:506.50px;color:rgba(120,120,120,0.85);font-size:18.5px;font-weight:normal;transform:scaleX(0.9936);">@</div>
</body></html>
